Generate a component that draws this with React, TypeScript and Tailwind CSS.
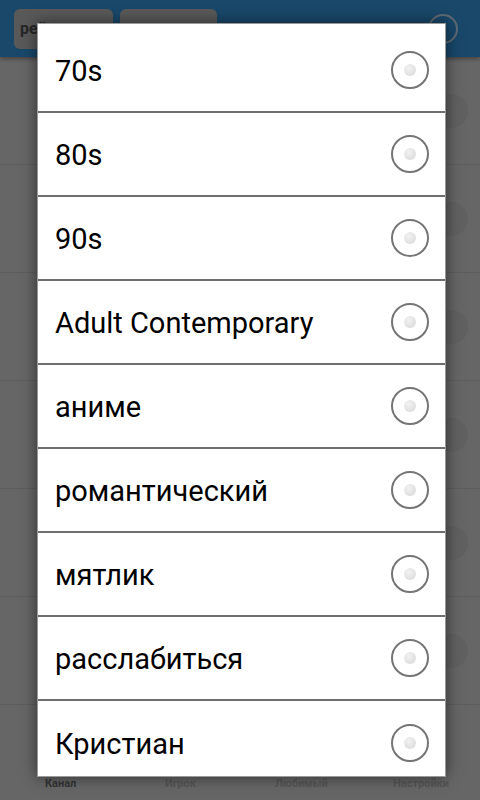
import React from "react";

const genres = ["70s", "80s", "90s", "Adult Contemporary", "аниме", "романтический", "мятлик", "расслабиться", "Кристиан"];
const tabs = ["Канал", "Игрок", "Любимый", "Настройки"];

function Radio() {
  return (
    <span className="w-[38px] h-[38px] rounded-full border-2 border-[#757575] flex items-center justify-center flex-shrink-0">
      <span className="w-[12px] h-[12px] rounded-full bg-[radial-gradient(circle_at_40%_35%,#f2f2f2,#d6d6d6)]" />
    </span>
  );
}

function BgRow() {
  return (
    <div className="h-[108px] border-b border-[#5d5d5d] flex items-center justify-end pr-[12px]">
      <span className="w-[34px] h-[34px] rounded-full bg-[#616161]" />
    </div>
  );
}

export default function App() {
  return (
    <div className="relative w-[480px] h-[800px] overflow-hidden bg-[#666666] font-['Roboto',sans-serif]">
      {/* dimmed app behind the dialog */}
      <div className="h-[57px] bg-[#19486a] flex items-center px-[14px] gap-[7px] shadow-[0_2px_4px_rgba(0,0,0,0.35)]">
        <div className="w-[99px] h-[40px] rounded-[6px] bg-[#595959] flex items-center px-[6px] text-[16px] font-bold text-[#262626]">рейтинг</div>
        <div className="w-[97px] h-[40px] rounded-[6px] bg-[#595959]" />
        <div className="flex-1" />
        <div className="w-[30px] h-[30px] rounded-full border-2 border-[#5f6b75] mr-[8px]" />
      </div>
      <div className="flex flex-col">
        {[0, 1, 2, 3, 4, 5].map((i) => <BgRow key={i} />)}
      </div>
      <div className="absolute left-0 right-0 bottom-0 h-[36px] flex items-start pt-[12px] text-[11px] font-bold text-[#555555]">
        <span className="w-[120px] pl-[45px] text-[#333333]">{tabs[0]}</span>
        <span className="w-[120px] pl-[45px]">{tabs[1]}</span>
        <span className="w-[120px] pl-[35px]">{tabs[2]}</span>
        <span className="w-[120px] pl-[33px]">{tabs[3]}</span>
      </div>

      {/* single choice dialog */}
      <div className="absolute left-[37px] top-[23px] w-[409px] h-[754px] bg-white border border-[#9a9a9a] shadow-[0_0_14px_rgba(0,0,0,0.55)] overflow-hidden pt-[5px]">
        {genres.map((g, i) => (
          <div key={g} className={`h-[84px] flex items-center justify-between pl-[17px] pr-[16px] ${i < genres.length - 1 ? "border-b-2 border-[#6e6e6e]" : ""}`}>
            <span className="text-[29px] text-black leading-none pt-[3px]">{g}</span>
            <Radio />
          </div>
        ))}
      </div>
    </div>
  );
}
